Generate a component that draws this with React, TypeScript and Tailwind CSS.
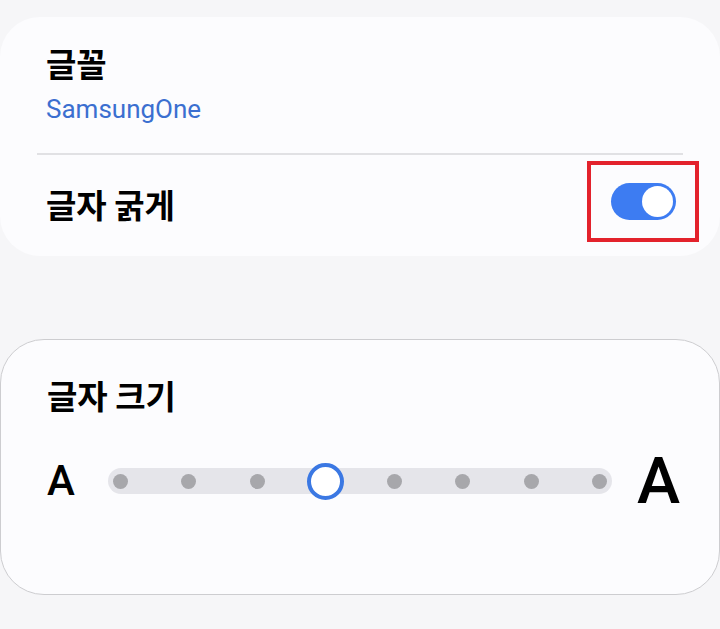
import type { FC } from 'react';

const kr = "font-['Noto_Sans_CJK_KR','Noto_Sans',sans-serif]";
const latin = "font-['Roboto','Noto_Sans',sans-serif]";

const Toggle: FC<{ on: boolean }> = ({ on }) => (
  <div
    className={`w-[65px] h-[37px] rounded-full flex items-center px-[3px] ${
      on ? 'bg-[#3d7cf2] justify-end' : 'bg-[#c9c9cc] justify-start'
    }`}
  >
    <div className="w-[31px] h-[31px] rounded-full bg-white" />
  </div>
);

const SizeSlider: FC<{ steps: number; value: number }> = ({ steps, value }) => (
  <div className="flex-1 h-[26px] rounded-full bg-[#e5e5ea] flex items-center justify-between px-[5px]">
    {Array.from({ length: steps }).map((_, i) => (
      <div key={i} className="w-[15px] h-[15px] flex items-center justify-center">
        {i === value ? (
          <div className="w-[37px] h-[37px] shrink-0 rounded-full bg-white border-[4px] border-[#3b78e3]" />
        ) : (
          <div className="w-[15px] h-[15px] shrink-0 rounded-full bg-[#a7a7ab]" />
        )}
      </div>
    ))}
  </div>
);

export default function App() {
  return (
    <div className="w-[720px] h-[629px] bg-[#f6f6f8] pt-[17px] flex flex-col overflow-hidden">
      <section className="h-[239px] bg-[#fcfcfe] rounded-[40px] flex flex-col">
        <div className="h-[136px] px-[46px] pt-[23px]">
          <p className={`${kr} text-[33px] leading-[46px] font-bold text-black`}>글꼴</p>
          <p className={`${latin} mt-[8px] text-[26px] leading-[30px] text-[#3b6fd0]`}>SamsungOne</p>
        </div>
        <div className="mx-[37px] h-[2px] bg-[#e1e1e4]" />
        <div className="flex-1 flex items-center pl-[46px] pr-[21px] pb-[2px]">
          <p className={`${kr} flex-1 text-[33px] font-bold text-black`}>글자 굵게</p>
          <div className="w-[112px] h-[81px] border-[4px] border-[#e3222c] flex items-center justify-center mb-[6px]">
            <Toggle on />
          </div>
        </div>
      </section>

      <section className="mt-[83px] h-[256px] bg-[#fcfcfe] rounded-[44px] border border-[#cdcdd0] pl-[46px] pr-[39px] pt-[32px]">
        <p className={`${kr} text-[33px] leading-[46px] font-bold text-black`}>글자 크기</p>
        <div className="mt-[33px] flex items-center h-[60px]">
          <span className={`${latin} w-[61px] text-[42px] font-medium text-black leading-none`}>A</span>
          <SizeSlider steps={8} value={3} />
          <span className={`${latin} w-[68px] text-right text-[65px] font-medium text-black leading-none`}>A</span>
        </div>
      </section>
    </div>
  );
}
